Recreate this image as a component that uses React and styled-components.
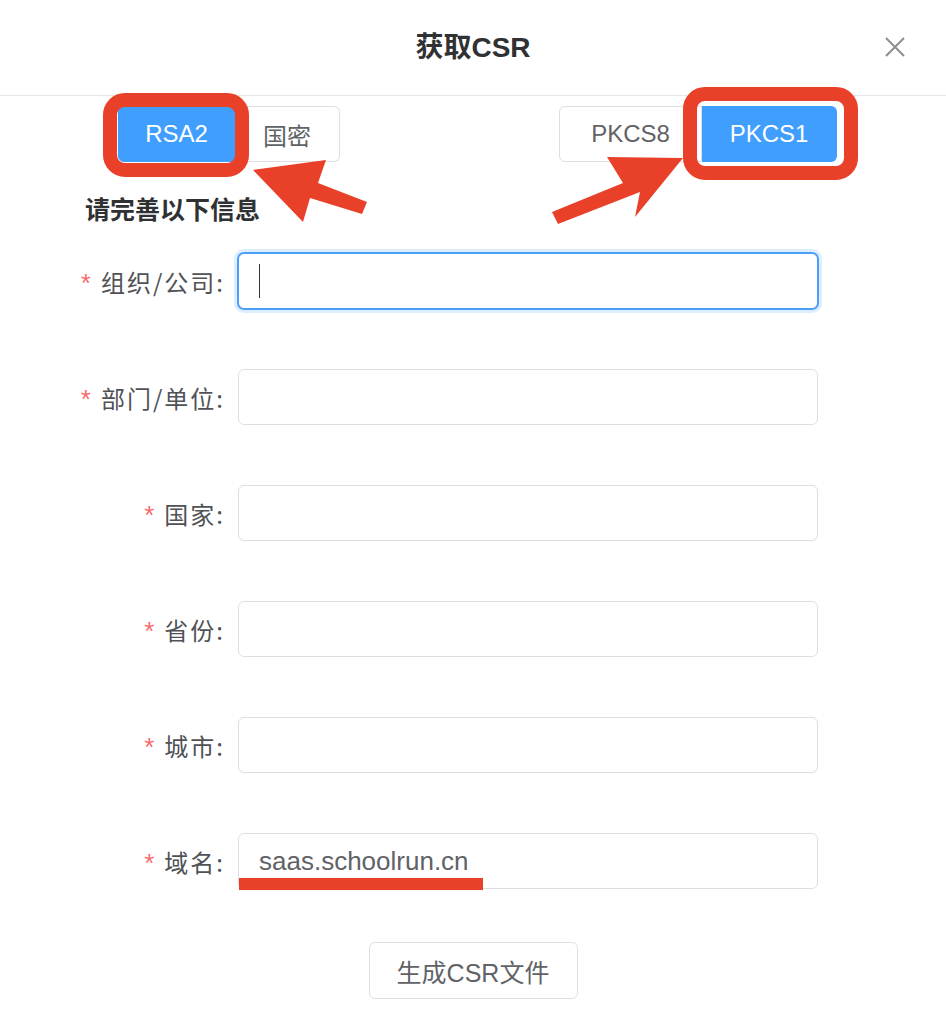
import React from 'react';
import styled, { createGlobalStyle } from 'styled-components';

const GlobalStyle = createGlobalStyle`
	html, body {
		margin: 0;
		padding: 0;
		background: #fff;
	}
	body {
		font-family: "Liberation Sans", "Noto Sans CJK SC", sans-serif;
		color: #303133;
	}
`;

const Dialog = styled.div`
	position: relative;
	width: 946px;
	min-height: 1024px;
	background: #fff;
	overflow: hidden;
`;
const Header = styled.div`
	position: relative;
	height: 96px;
	box-sizing: border-box;
	padding-bottom: 5px;
	display: flex;
	align-items: center;
	justify-content: center;
	border-bottom: 1px solid #e6e6e6;
`;
const Title = styled.h2`
	margin: 0;
	font-size: 28px;
	font-weight: 700;
	color: #303133;
`;
const Close = styled.button`
	position: absolute;
	top: 37px;
	right: 41px;
	width: 20px;
	height: 20px;
	padding: 0;
	border: none;
	background: none;
	display: block;
`;
const ToggleRow = styled.div`
	display: flex;
	justify-content: space-between;
	margin-top: 10px;
	padding: 0 109px 0 118px;
`;
const Group = styled.div`
	display: flex;
`;
const SegButton = styled.div`
	width: ${props => props.w}px;
	height: 56px;
	box-sizing: border-box;
	display: flex;
	align-items: center;
	justify-content: center;
	font-size: 24px;
	border: 1px solid ${props => (props.$active ? '#409eff' : '#dcdfe6')};
	background: ${props => (props.$active ? '#409eff' : '#fff')};
	color: ${props => (props.$active ? '#fff' : '#606266')};
	&:first-child {
		border-radius: 6px 0 0 6px;
	}
	&:last-child {
		border-radius: 0 6px 6px 0;
	}
	& + & {
		border-left: none;
	}
`;
const SectionTitle = styled.div`
	margin-top: 32px;
	padding-left: 85px;
	font-size: 25px;
	line-height: 32px;
	font-weight: 700;
	color: #303133;
`;
const Form = styled.div`
	margin-top: 27px;
	display: flex;
	flex-direction: column;
	gap: 60px;
`;
const Row = styled.div`
	display: grid;
	grid-template-columns: 238px 580px;
	align-items: center;
	height: 56px;
`;
const Label = styled.label`
	text-align: right;
	padding-right: 13px;
	font-family: "Noto Sans CJK SC", sans-serif;
	font-size: 24px;
	letter-spacing: 2px;
	color: #505256;
	white-space: nowrap;
`;
const Star = styled.span`
	color: #f56c6c;
	margin-right: 8px;
	font-family: "Liberation Sans", sans-serif;
	font-size: 26px;
`;
const Field = styled.div`
	position: relative;
	height: 56px;
	box-sizing: border-box;
	display: flex;
	align-items: center;
	padding: 0 20px;
	border: 1px solid ${props => (props.$focused ? '#4a9ffa' : '#dcdfe6')};
	border-radius: 6px;
	box-shadow: ${props => (props.$focused ? '0 0 0 1px #4a9ffa, 0 0 0 4px rgba(64,158,255,0.18)' : 'none')};
	font-size: 26px;
	color: #606266;
	background: #fff;
`;
const Caret = styled.span`
	display: block;
	width: 1px;
	height: 34px;
	background: #333;
`;
const Underline = styled.span`
	position: absolute;
	left: 0;
	bottom: -2px;
	width: 244px;
	height: 12px;
	background: #e94129;
`;
const Footer = styled.div`
	margin-top: 53px;
	display: flex;
	justify-content: center;
`;
const GenButton = styled.button`
	width: 209px;
	height: 57px;
	border: 1px solid #dcdfe6;
	border-radius: 6px;
	background: #fff;
	color: #606266;
	font-family: "Liberation Sans", "Noto Sans CJK SC", sans-serif;
	font-size: 25px;
	padding: 0;
`;
const Marks = styled.svg`
	position: absolute;
	left: 0;
	top: 0;
	pointer-events: none;
`;

const fields = [
	{ label: '组织/公司:', focused: true },
	{ label: '部门/单位:' },
	{ label: '国家:' },
	{ label: '省份:' },
	{ label: '城市:' },
	{ label: '域名:', value: 'saas.schoolrun.cn', mark: true },
];

const App = () => {
	return (
		<>
			<GlobalStyle />
			<Dialog>
				<Header>
					<Title>获取CSR</Title>
					<Close aria-label="close">
						<svg width="20" height="20" viewBox="0 0 20 20">
							<path d="M1 1 L19 19 M19 1 L1 19" stroke="#8e8e8e" strokeWidth="2" fill="none" />
						</svg>
					</Close>
				</Header>
				<ToggleRow>
					<Group>
						<SegButton w={117} $active>RSA2</SegButton>
						<SegButton w={105}>国密</SegButton>
					</Group>
					<Group>
						<SegButton w={143}>PKCS8</SegButton>
						<SegButton w={135} $active>PKCS1</SegButton>
					</Group>
				</ToggleRow>
				<SectionTitle>请完善以下信息</SectionTitle>
				<Form>
					{fields.map(f => (
						<Row key={f.label}>
							<Label>
								<Star>*</Star>
								{f.label}
							</Label>
							<Field $focused={f.focused}>
								{f.focused && <Caret />}
								{f.value}
								{f.mark && <Underline />}
							</Field>
						</Row>
					))}
				</Form>
				<Footer>
					<GenButton>生成CSR文件</GenButton>
				</Footer>
				<Marks width="946" height="1024" viewBox="0 0 946 1024">
					<rect x="110" y="100" width="132" height="70" rx="15" fill="none" stroke="#e94129" strokeWidth="14" />
					<rect x="690" y="94" width="161" height="79" rx="15" fill="none" stroke="#e94129" strokeWidth="14" />
					<polygon points="253,170 326,160 318,183 367,202 362,214 310,198 303,222" fill="#e94129" />
					<polygon points="683,158 635,217 640,192 558,224 552,212 623,183 607,157" fill="#e94129" />
				</Marks>
			</Dialog>
		</>
	);
};

export default App;
